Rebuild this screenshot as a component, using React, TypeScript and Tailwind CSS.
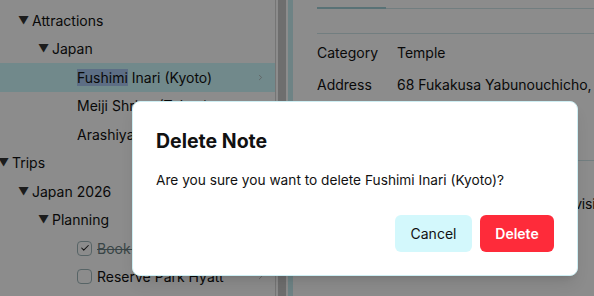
import React from 'react';
import { ChevronRight, Check } from 'lucide-react';

type Row = {
  label: string;
  pad: string;
  kind: 'branch' | 'leaf' | 'todo';
  done?: boolean;
  selected?: boolean;
};

const rows: Row[] = [
  { label: 'Attractions', pad: 'pl-[18px]', kind: 'branch' },
  { label: 'Japan', pad: 'pl-[38px]', kind: 'branch' },
  { label: 'Fushimi Inari (Kyoto)', pad: 'pl-[77px]', kind: 'leaf', selected: true },
  { label: 'Meiji Shrine (Tokyo)', pad: 'pl-[77px]', kind: 'leaf' },
  { label: 'Arashiyama Bamboo Grove', pad: 'pl-[77px]', kind: 'leaf' },
  { label: 'Trips', pad: 'pl-[0px] -ml-[2px]', kind: 'branch' },
  { label: 'Japan 2026', pad: 'pl-[18px]', kind: 'branch' },
  { label: 'Planning', pad: 'pl-[38px]', kind: 'branch' },
  { label: 'Book JR Pass', pad: 'pl-[77px]', kind: 'todo', done: true },
  { label: 'Reserve Park Hyatt', pad: 'pl-[77px]', kind: 'todo' },
];

const TreeRow = ({ row }: { row: Row }) => (
  <div
    className={`h-[28.5px] flex items-center pr-[10px] ${row.pad} ${row.selected ? 'bg-cyan-100' : ''}`}
  >
    {row.kind === 'branch' && (
      <span className="w-[14px] shrink-0 text-[11px] leading-none text-[#333]">▼</span>
    )}
    {row.kind === 'todo' && (
      <span className="w-[15px] h-[15px] shrink-0 mr-[5px] rounded-[4px] border border-[#9fb7bb] flex items-center justify-center bg-white">
        {row.done && <Check size={10} strokeWidth={2.5} className="text-[#222]" />}
      </span>
    )}
    <span
      className={`flex-1 truncate text-[14px] ${row.done ? 'line-through text-[#6b7f82]' : 'text-[#111]'}`}
    >
      {row.selected ? (
        <>
          <span className="bg-[#a9c9f2]">Fushimi</span> Inari (Kyoto)
        </>
      ) : (
        row.label
      )}
    </span>
    {row.kind !== 'branch' && <ChevronRight size={9} className="text-[#a5a5a5] shrink-0" />}
  </div>
);

const Field = ({ label, value }: { label: string; value: string }) => (
  <div className="h-[32px] flex items-center text-[14px] text-[#111] whitespace-nowrap">
    <span className="w-[80px] shrink-0">{label}</span>
    <span>{value}</span>
  </div>
);

export default function App() {
  return (
    <div
      className="relative w-[594px] h-[296px] overflow-hidden bg-white"
      style={{ fontFamily: 'Inter, "Noto Sans", sans-serif' }}
    >
      <div className="flex h-full">
        <aside className="w-[276px] shrink-0 border-r border-[#d6d6d6] pt-[6px] overflow-hidden">
          {rows.map((r) => (
            <TreeRow key={r.label} row={r} />
          ))}
        </aside>
        <div className="w-[2px] shrink-0" />
        <div className="w-[8px] shrink-0 bg-[#c8c8c8]" />
        <div className="w-[2px] shrink-0" />
        <div className="w-[5px] shrink-0 bg-[#c8eef3]" />
        <main className="flex-1 min-w-0 pl-[24px] overflow-hidden">
          <div className="border-b border-[#cfe6ea] h-[9px] flex items-end">
            <div className="w-[69px] h-[2px] bg-[#a3d0d7] -mb-px" />
          </div>
          <div className="h-[25px] border-b border-[#cfe6ea]" />
          <div className="pt-[2px]">
            <Field label="Category" value="Temple" />
            <Field label="Address" value="68 Fukakusa Yabunouchicho, Fushimi Ward, Kyoto" />
            <Field label="Hours" value="Open 24 hours" />
          </div>
          <div className="mt-[28px] border-b border-[#cfe6ea]" />
          <div className="pt-[33px] text-[14px] leading-[20px] tracking-[-0.2px] text-[#111] whitespace-nowrap">
            Go early in the morning to beat crowds, visit the upper shrines
          </div>
        </main>
      </div>

      <div className="absolute inset-0 bg-black/45" />

      <div className="absolute left-[132px] top-[101px] w-[446px] h-[175px] bg-white rounded-[8px] border border-[#cdeef3] shadow-lg px-[23px] pt-[26px]">
        <h2 className="text-[19.5px] font-bold text-[#111] leading-[26px]">Delete Note</h2>
        <p className="mt-[16px] text-[13.7px] text-[#111] leading-[20px]">
          Are you sure you want to delete Fushimi Inari (Kyoto)?
        </p>
        <div className="mt-[25px] flex justify-end gap-[8px]">
          <button className="w-[77px] h-[37px] rounded-[6px] bg-[#d3f8fc] text-[14px] text-[#111]">
            Cancel
          </button>
          <button className="w-[74px] h-[37px] rounded-[6px] bg-[#fe2b3a] text-[14px] font-semibold text-white">
            Delete
          </button>
        </div>
      </div>
    </div>
  );
}
